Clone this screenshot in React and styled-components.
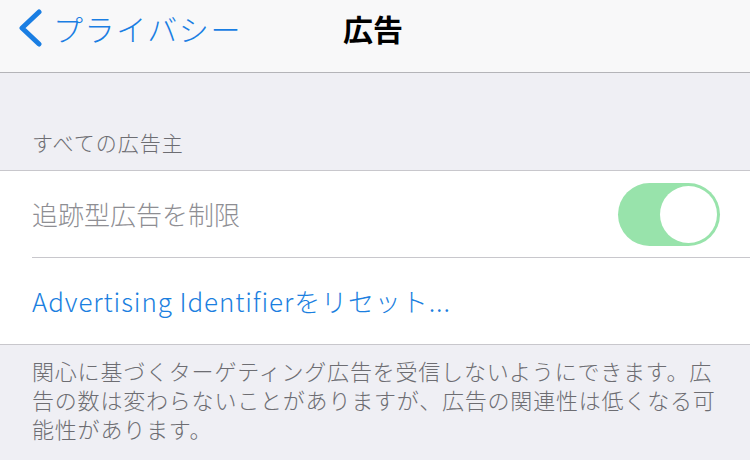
import React from "react";
import styled, { createGlobalStyle } from "styled-components";

const Global = createGlobalStyle`
  html, body { margin: 0; padding: 0; }
  body {
    width: 750px; height: 460px; overflow: hidden;
    background: #efeff4;
    font-family: "Noto Sans CJK JP", "Noto Sans", sans-serif;
    -webkit-font-smoothing: antialiased;
  }
`;

const Page = styled.div`
  width: 750px;
  height: 460px;
  display: flex;
  flex-direction: column;
  background: #efeff4;
`;

const NavBar = styled.div`
  height: 72px;
  flex: none;
  background: #f8f8f9;
  border-bottom: 1px solid #b4b4b8;
  display: grid;
  grid-template-columns: 1fr auto 1fr;
  align-items: center;
`;

const BackButton = styled.div`
  display: flex;
  align-items: center;
  gap: 10px;
  padding-left: 17px;
  color: #1a7ee3;
  font-size: 30px;
  font-weight: 300;
  letter-spacing: 1.6px;
  margin-top: -16px;
`;

const Title = styled.div`
  font-size: 30px;
  font-weight: 700;
  color: #000;
  margin-top: -16px;
  margin-left: -4px;
`;

const SectionHeader = styled.div`
  height: 98px;
  box-sizing: border-box;
  padding: 0 32px 13px;
  display: flex;
  align-items: flex-end;
  font-size: 21px;
  font-weight: 300;
  letter-spacing: 1px;
  color: #6d6d72;
  border-bottom: 1px solid #c8c7cc;
`;

const Group = styled.div`
  background: #fff;
  border-bottom: 1px solid #c8c7cc;
`;

const Row = styled.div`
  height: 86px;
  display: flex;
  align-items: center;
  justify-content: space-between;
  padding: 0 30px 0 32px;
`;

const RowInset = styled.div`
  margin-left: 32px;
  height: 1px;
  background: #c8c7cc;
`;

const Label = styled.div`
  font-size: 26px;
  font-weight: 300;
  color: ${(p) => (p.$link ? "#1b7fe0" : "#8e8e93")};
  letter-spacing: ${(p) => (p.$link ? "0.9px" : "0")};
  margin-top: -2px;
`;

const Toggle = styled.div`
  width: 102px;
  height: 63px;
  border-radius: 32px;
  background: #98e3ab;
  display: flex;
  align-items: center;
  justify-content: flex-end;
  padding: 3px;
  box-sizing: border-box;
`;

const Knob = styled.div`
  width: 57px;
  height: 57px;
  border-radius: 50%;
  background: #fff;
`;

const Footer = styled.div`
  padding: 11px 30px 0 32px;
  font-size: 22px;
  font-weight: 300;
  line-height: 29px;
  color: #6d6d72;
  letter-spacing: 0.8px;
`;

const Chevron = () => (
  <svg width="26" height="38" viewBox="0 0 26 38">
    <path
      d="M22 3 L5 19 L22 35"
      fill="none"
      stroke="#1a7ee3"
      strokeWidth="5"
      strokeLinecap="round"
      strokeLinejoin="round"
    />
  </svg>
);

export default function App() {
  return (
    <>
      <Global />
      <Page>
        <NavBar>
          <BackButton>
            <Chevron />
            <span>プライバシー</span>
          </BackButton>
          <Title>広告</Title>
          <div />
        </NavBar>
        <SectionHeader>すべての広告主</SectionHeader>
        <Group>
          <Row>
            <Label>追跡型広告を制限</Label>
            <Toggle>
              <Knob />
            </Toggle>
          </Row>
          <RowInset />
          <Row>
            <Label $link>Advertising Identifierをリセット...</Label>
          </Row>
        </Group>
        <Footer>
          関心に基づくターゲティング広告を受信しないようにできます。広告の数は変わらないことがありますが、広告の関連性は低くなる可能性があります。
        </Footer>
      </Page>
    </>
  );
}
